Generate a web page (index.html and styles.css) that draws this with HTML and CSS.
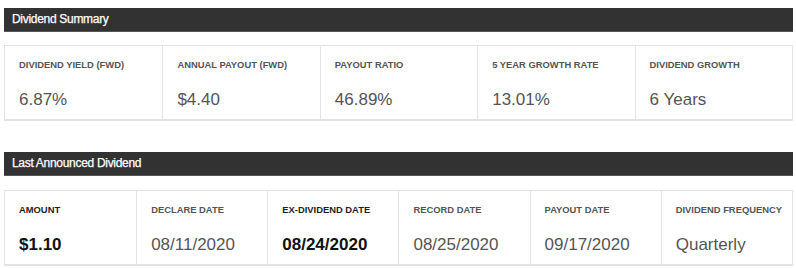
FILE: index.html
```html
<!DOCTYPE html>
<html>
<head>
<meta charset="utf-8">
<link rel="stylesheet" href="styles.css">
</head>
<body>
<div class="page">
  <section class="section">
    <h2 class="bar">Dividend Summary</h2>
    <div class="card cols-5">
      <div class="cell"><div class="label">Dividend Yield (FWD)</div><div class="value">6.87%</div></div>
      <div class="cell"><div class="label">Annual Payout (FWD)</div><div class="value">$4.40</div></div>
      <div class="cell"><div class="label">Payout Ratio</div><div class="value">46.89%</div></div>
      <div class="cell"><div class="label">5 Year Growth Rate</div><div class="value">13.01%</div></div>
      <div class="cell"><div class="label">Dividend Growth</div><div class="value">6 Years</div></div>
    </div>
  </section>
  <section class="section second">
    <h2 class="bar">Last Announced Dividend</h2>
    <div class="card cols-6">
      <div class="cell strong"><div class="label">Amount</div><div class="value">$1.10</div></div>
      <div class="cell"><div class="label">Declare Date</div><div class="value">08/11/2020</div></div>
      <div class="cell strong"><div class="label">Ex-Dividend Date</div><div class="value">08/24/2020</div></div>
      <div class="cell"><div class="label">Record Date</div><div class="value">08/25/2020</div></div>
      <div class="cell"><div class="label">Payout Date</div><div class="value">09/17/2020</div></div>
      <div class="cell"><div class="label">Dividend Frequency</div><div class="value">Quarterly</div></div>
    </div>
  </section>
</div>
</body>
</html>
```

FILE: styles.css
```css
html, body {
  margin: 0;
  padding: 0;
  background: #fff;
}
.page {
  padding: 8px 3px 0 4px;
  font-family: "Liberation Sans", Arial, sans-serif;
}
.section.second {
  margin-top: 31px;
}
.bar {
  margin: 0;
  box-sizing: border-box;
  height: 24px;
  line-height: 23px;
  padding-left: 8px;
  background: #323232;
  border-bottom: 1px solid #555;
  color: #fff;
  font-family: "Liberation Sans", Arial, sans-serif;
  font-size: 12px;
  letter-spacing: -0.3px;
  font-weight: normal;
  -webkit-text-stroke: 0.25px #fff;
}
.card {
  margin-top: 13px;
  display: grid;
  border: 1px solid #e3e3e3;
  border-bottom: 2px solid #e3e3e3;
}
.second .card {
  margin-top: 14px;
}
.cols-5 { grid-template-columns: repeat(5, 1fr); }
.cols-6 { grid-template-columns: repeat(6, 1fr); }
.cell {
  padding: 13px 10px 9px 14px;
  border-left: 1px solid #e3e3e3;
}
.cell:first-child {
  border-left: none;
}
.label {
  font-size: 9.4px;
  line-height: 11px;
  font-weight: bold;
  text-transform: uppercase;
  color: #555;
  white-space: nowrap;
}
.value {
  margin-top: 20px;
  font-size: 17px;
  line-height: 20px;
  color: #555;
  white-space: nowrap;
}
.strong .label {
  color: #1e1e1e;
}
.strong .value {
  color: #111;
  font-weight: bold;
}
```
